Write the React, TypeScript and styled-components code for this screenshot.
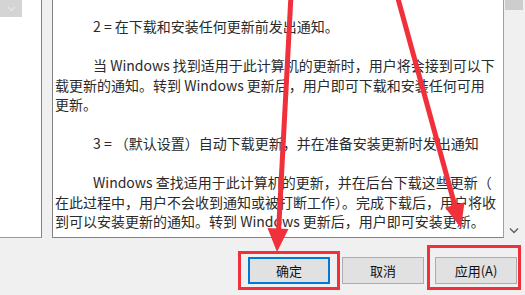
import React from "react";
import styled, { createGlobalStyle } from "styled-components";

const GlobalStyle = createGlobalStyle`
  html, body {
    margin: 0;
    padding: 0;
    background: #f0f0f0;
  }
  body {
    font-family: "Noto Sans CJK SC", "Noto Sans", sans-serif;
  }
`;

const Page = styled.div`
  position: relative;
  width: 525px;
  height: 295px;
  overflow: hidden;
  background: #f0f0f0;
`;

const Body = styled.div`
  display: flex;
  height: 238px;
`;

const SidePanel = styled.div`
  width: 41px;
  background: #ffffff;
  border-right: 1px solid #828282;
  border-bottom: 1px solid #9a9a9a;
  box-sizing: border-box;
  width: 42px;
`;

const SideArrowBox = styled.div`
  width: 22px;
  height: 17px;
  background: #d4d4d4;
  display: flex;
  align-items: center;
  justify-content: center;
`;

const Editor = styled.div`
  display: flex;
  margin-left: 10px;
  flex: 1;
`;

const TextArea = styled.div`
  width: 452px;
  box-sizing: border-box;
  background: #ffffff;
  border-left: 1px solid #828282;
  border-right: 1px solid #a0a0a0;
  border-bottom: 1px solid #828282;
  padding: 17px 0 0 2px;
  color: #2a2a2a;
  font-size: 14px;
`;

const Line = styled.div<{ $indent?: boolean }>`
  height: 19.5px;
  line-height: 19.5px;
  white-space: nowrap;
  padding-left: ${(p) => (p.$indent ? "38px" : "0")};
`;

const ScrollBar = styled.div`
  flex: 1;
  display: flex;
  flex-direction: column;
  justify-content: space-between;
  background: #f0f0f0;
  padding-bottom: 4px;
`;

const Thumb = styled.div`
  margin-left: 1px;
  width: 18px;
  height: 10px;
  background: #cdcdcd;
`;

const ScrollDown = styled.div`
  display: flex;
  justify-content: center;
  width: 19px;
`;

const ButtonBar = styled.div`
  display: flex;
  gap: 12px;
  padding: 19px 0 0 248px;
`;

const DialogButton = styled.button<{ $primary?: boolean }>`
  width: 82px;
  height: 27px;
  box-sizing: border-box;
  margin: 0;
  padding: 0;
  background: #e1e1e1;
  border: ${(p) => (p.$primary ? "2px solid #0078d7" : "1px solid #adadad")};
  font-family: "Noto Sans CJK SC", "Noto Sans", sans-serif;
  font-size: 13px;
  color: #111;
  &:last-child {
    margin-left: -1px;
  }
`;

const Annotations = styled.svg`
  position: absolute;
  left: 0;
  top: 0;
  pointer-events: none;
`;

const RED = "#f0303a";

const paragraphs: { text: string; indent?: boolean }[][] = [
  [{ text: "2 = 在下载和安装任何更新前发出通知。", indent: true }],
  [
    { text: "当 Windows 找到适用于此计算机的更新时，用户将会接到可以下", indent: true },
    { text: "载更新的通知。转到 Windows 更新后，用户即可下载和安装任何可用" },
    { text: "更新。" },
  ],
  [{ text: "3 = （默认设置）自动下载更新，并在准备安装更新时发出通知", indent: true }],
  [
    { text: "Windows 查找适用于此计算机的更新，并在后台下载这些更新（", indent: true },
    { text: "在此过程中，用户不会收到通知或被打断工作）。完成下载后，用户将收" },
    { text: "到可以安装更新的通知。转到 Windows 更新后，用户即可安装更新。" },
  ],
];

const App: React.FC = () => {
  return (
    <Page>
      <GlobalStyle />
      <Body>
        <SidePanel>
          <SideArrowBox>
            <svg width="9" height="6" viewBox="0 0 9 6">
              <path d="M1 1 L4.5 4.5 L8 1" fill="none" stroke="#e6e6e6" strokeWidth="1.2" />
            </svg>
          </SideArrowBox>
        </SidePanel>
        <Editor>
          <TextArea>
            {paragraphs.map((para, i) => (
              <React.Fragment key={i}>
                {i > 0 && <Line />}
                {para.map((l, j) => (
                  <Line key={j} $indent={l.indent}>
                    {l.text}
                  </Line>
                ))}
              </React.Fragment>
            ))}
          </TextArea>
          <ScrollBar>
            <Thumb />
            <ScrollDown>
              <svg width="10" height="7" viewBox="0 0 10 7">
                <path d="M1 1.5 L5 5.5 L9 1.5" fill="none" stroke="#606060" strokeWidth="1.4" />
              </svg>
            </ScrollDown>
          </ScrollBar>
        </Editor>
      </Body>
      <ButtonBar>
        <DialogButton $primary>确定</DialogButton>
        <DialogButton>取消</DialogButton>
        <DialogButton>应用(A)</DialogButton>
      </ButtonBar>
      <Annotations width="525" height="295" viewBox="0 0 525 295">
        <line x1="291" y1="-5" x2="278.5" y2="232" stroke={RED} strokeWidth="5" />
        <polygon points="277,252 267.5,228 288.5,229" fill={RED} />
        <line x1="397" y1="-5" x2="455" y2="206" stroke={RED} strokeWidth="5" />
        <polygon points="461,228 445,207.5 464.5,202.2" fill={RED} />
        <rect x="239.5" y="252.5" width="99" height="36" fill="none" stroke={RED} strokeWidth="3" />
        <rect x="428.5" y="246.5" width="91" height="42" fill="none" stroke={RED} strokeWidth="3" />
      </Annotations>
    </Page>
  );
};

export default App;
